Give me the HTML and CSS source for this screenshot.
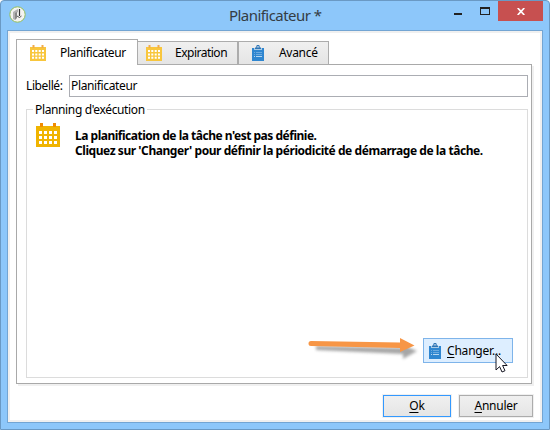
FILE: index.html
```html
<!DOCTYPE html>
<html lang="fr">
<head>
<meta charset="utf-8">
<title>Planificateur</title>
<link rel="stylesheet" href="styles.css">
</head>
<body>
<svg width="0" height="0" class="defs">
  <symbol id="calendar" viewBox="0 0 24 24">
    <path fill="#f0b400" d="M0 3h24v21H0z"/>
    <path fill="#fff" d="M3 8h3v3H3zm5 0h3v3H8zm5 0h3v3h-3zm5 0h3v3h-3zM3 13h3v3H3zm5 0h3v3H8zm5 0h3v3h-3zm5 0h3v3h-3zM3 18h3v3H3zm5 0h3v3H8zm5 0h3v3h-3zm5 0h3v3h-3z"/>
    <path fill="#f08c00" d="M4 0h3v4H4zm13 0h3v4h-3z"/>
  </symbol>
  <symbol id="calendar-small" viewBox="0 0 16 16">
    <path fill="#f8c63d" d="M0 2h16v14H0z"/>
    <path fill="#fff" d="M2 5h2v2H2zm3.3 0h2v2h-2zm3.4 0h2v2h-2zm3.3 0h2v2h-2zM2 8.4h2v2H2zm3.3 0h2v2h-2zm3.4 0h2v2h-2zm3.3 0h2v2h-2zM2 11.8h2v2H2zm3.3 0h2v2h-2zm3.4 0h2v2h-2zm3.3 0h2v2h-2z"/>
    <path fill="#f2ac4a" d="M2.5 0h2v3h-2zm9 0h2v3h-2z"/>
  </symbol>
  <symbol id="clipboard" viewBox="0 0 12 16">
    <path fill="#2f86d0" d="M0 3h12v13H0z"/>
    <path fill="#a9cbe6" d="M2 3h8v2H2z"/>
    <path fill="#2f75b5" d="M3 4V2.500h1.300V1L5 0h2l.7 1v1.500H9V4z"/>
    <path fill="#eef3f8" d="M5.300 1.200h1.400v1.300H5.300z"/>
    <path fill="#6caadf" d="M2 7h1v1H2zm2 0h6v1H4zM2 9h1v1H2zm2 0h6v1H4z"/>
    <path fill="#b5d6f0" d="M2 11h1v1H2zm2 0h6v1H4z"/>
  </symbol>
</svg>
<div class="window">
  <header class="titlebar">
    <svg class="app-icon" viewBox="0 0 17 17">
      <circle cx="8.5" cy="8.5" r="7.7" fill="#f3f3f1" stroke="#93bd5b"/>
      <path d="M4 6l3-2 2-1v3L6 8v6l-2-1z" fill="#b2b2b2"/>
      <path d="M6 7l2-1v6l-2 2z" fill="#888"/>
      <path d="M10.500 3v7" stroke="#333" stroke-width="1.200"/>
      <path d="M8 10l2.500 1.500 2-1.500" fill="none" stroke="#555"/>
    </svg>
    <h1 class="title"><span>Planificateur *</span></h1>
    <div class="controls">
      <span class="minimize"></span>
      <span class="maximize"></span>
      <span class="close"><svg viewBox="0 0 8 7"><path d="M.7 0L7.3 7M7.3 0L.7 7" stroke="#fff" stroke-width="1.7"/></svg></span>
    </div>
  </header>
  <main class="client">
    <nav class="tabs">
      <div class="tab active"><svg class="cal"><use href="#calendar-small"/></svg><span class="t-plan">Planificateur</span></div>
      <div class="tab second"><svg class="cal"><use href="#calendar-small"/></svg><span class="t-exp">Expiration</span></div>
      <div class="tab third"><svg class="clip"><use href="#clipboard"/></svg><span class="t-adv">Avancé</span></div>
    </nav>
    <section class="pane">
      <div class="field"><label><span class="t-label">Libellé:</span></label><div class="input"><span class="t-value">Planificateur</span></div></div>
      <div class="group">
        <div class="legend"><span class="t-legend">Planning d'exécution</span></div>
        <div class="message">
          <svg class="big-cal"><use href="#calendar"/></svg>
          <p><span class="line line1">La planification de la tâche n'est pas définie.</span><span class="line line2">Cliquez sur 'Changer' pour définir la périodicité de démarrage de la tâche.</span></p>
        </div>
        <div class="change"><svg class="clip"><use href="#clipboard"/></svg><span class="t-change"><u>C</u>hanger...</span></div>
      </div>
    </section>
    <footer class="buttons">
      <div class="button primary"><span class="t-button"><u>O</u>k</span></div>
      <div class="button"><span class="t-button"><u>A</u>nnuler</span></div>
    </footer>
  </main>
  <svg class="arrow" viewBox="0 0 116 30">
    <path class="arrow-shadow" d="M11 13l87 2V12l14 6-14 8v-5L11 17z"/>
    <path fill="#f79646" d="M6 8l89 1.500V5l14.500 7.500L95 19v-4L6 13a2.500 2.500 0 0 1 0-5z"/>
  </svg>
  <svg class="cursor" viewBox="0 0 13 20"><path d="M1 1v16l3.600-3.400L7 19l3-1.300-2.400-5.200h4.500z" fill="#fff" stroke="#161622"/></svg>
</div>
</body>
</html>
```
FILE: styles.css
```css
* { box-sizing: border-box; }
body {
  margin: 0;
  background: #fff;
  color: #000;
  font: 12px/16px "Noto Sans", "Open Sans", sans-serif;
  overflow: hidden;
}
svg { display: block; flex: none; }
span { white-space: nowrap; }
u { text-decoration-thickness: 1px; text-underline-offset: 2px; }
.defs { position: absolute; }
.window {
  position: relative;
  width: 550px;
  height: 430px;
  padding: 0 6px;
  background: #8dc7fa;
  border: 1px solid #6a99c4;
  border-radius: 4px 4px 0 0;
}
.titlebar { height: 29px; display: flex; }
.app-icon { width: 17px; height: 17px; margin: 5px 0 0 2px; }
.title {
  flex: 1;
  margin: 4px 0 0 203px;
  font-size: 15px;
  line-height: 20px;
  font-weight: 400;
  letter-spacing: -.55px;
  color: #343c44;
}
.controls { display: flex; width: 89px; }
.minimize { width: 8px; height: 2px; margin-top: 12px; background: #222; }
.maximize { width: 10px; height: 8px; margin: 6px 0 0 18px; border: 1px solid #222; border-top-width: 2px; }
.close { width: 45px; height: 20px; margin-left: 8px; background: #c75050; display: flex; align-items: center; justify-content: center; }
.close svg { width: 8px; height: 7px; margin-top: 1px; }
.client {
  width: 536px;
  height: 393px;
  background: #fff;
  border: 1px solid #73a5d3;
  box-shadow: inset 0 0 0 2px #f0f0f0;
  padding: 8px 10px 0 8px;
}
.tabs { display: flex; align-items: flex-end; height: 26px; }
.tab {
  display: flex;
  align-items: center;
  height: 24px;
  border: 1px solid #acacac;
  background: linear-gradient(#f0f0f0, #e5e5e5);
}
.active { position: relative; z-index: 1; width: 122px; height: 26px; background: #fff; border-bottom: 0; padding-left: 13px; }
.second { width: 100px; border-left: 0; padding-left: 8px; }
.third { width: 91px; padding-left: 13px; }
.cal { width: 16px; height: 16px; }
.clip { width: 12px; height: 16px; }
.t-plan { margin-left: 14px; letter-spacing: -.38px; }
.t-exp { margin-left: 13px; letter-spacing: -.5px; }
.t-adv { margin-left: 15px; letter-spacing: -.3px; }
.t-label { letter-spacing: -.4px; }
.t-value { letter-spacing: -.36px; }
.t-legend { letter-spacing: -.36px; }
.t-button { letter-spacing: -.25px; }
.pane {
  width: 516px;
  height: 320px;
  margin-top: -1px;
  padding: 10px 3px 0 9px;
  border: 1px solid #a9a9a9;
  box-shadow: 2px 2px 0 #f0f0f0;
}
.field { display: flex; height: 22px; align-items: center; }
label { width: 43px; }
.input { width: 459px; height: 22px; border: 1px solid #abadb3; padding: 2px 1px; }
.group { width: 502px; height: 269px; margin-top: 12px; border: 1px solid #dcdcdc; display: flex; flex-direction: column; }
.legend { align-self: flex-start; height: 16px; margin: -8px 0 0 6px; padding: 0 2px; background: #fff; }
.message { display: flex; margin: 4px 0 0 9px; }
.big-cal { width: 24px; height: 24px; margin-top: 1px; }
.message p { margin: 6px 0 0 15px; font-weight: 700; }
.line { display: block; line-height: 15px; }
.line1 { letter-spacing: -.49px; }
.line2 { letter-spacing: -.44px; }
.change { display: flex; align-items: center; width: 90px; height: 25px; margin: auto 14px 14px auto; padding-left: 5px; background: #ddeeff; border: 1px solid #7eb4ea; }
.t-change { margin-left: 6px; letter-spacing: -.2px; }
.buttons { display: flex; justify-content: flex-end; gap: 8px; padding: 11px 0 0; margin-right: -1px; }
.button { width: 74px; height: 22px; border: 1px solid #acacac; background: linear-gradient(#f0f0f0, #e5e5e5); display: flex; justify-content: center; align-items: center; box-shadow: 0 0 0 1px #f0f0f0; }
.primary { width: 68px; border-color: #3399ff; }
.arrow { position: absolute; left: 304px; top: 332px; width: 116px; height: 30px; }
.arrow-shadow { fill: #777; opacity: .65; filter: blur(1.4px); }
.cursor { position: absolute; left: 494px; top: 352px; width: 13px; height: 20px; }
```
